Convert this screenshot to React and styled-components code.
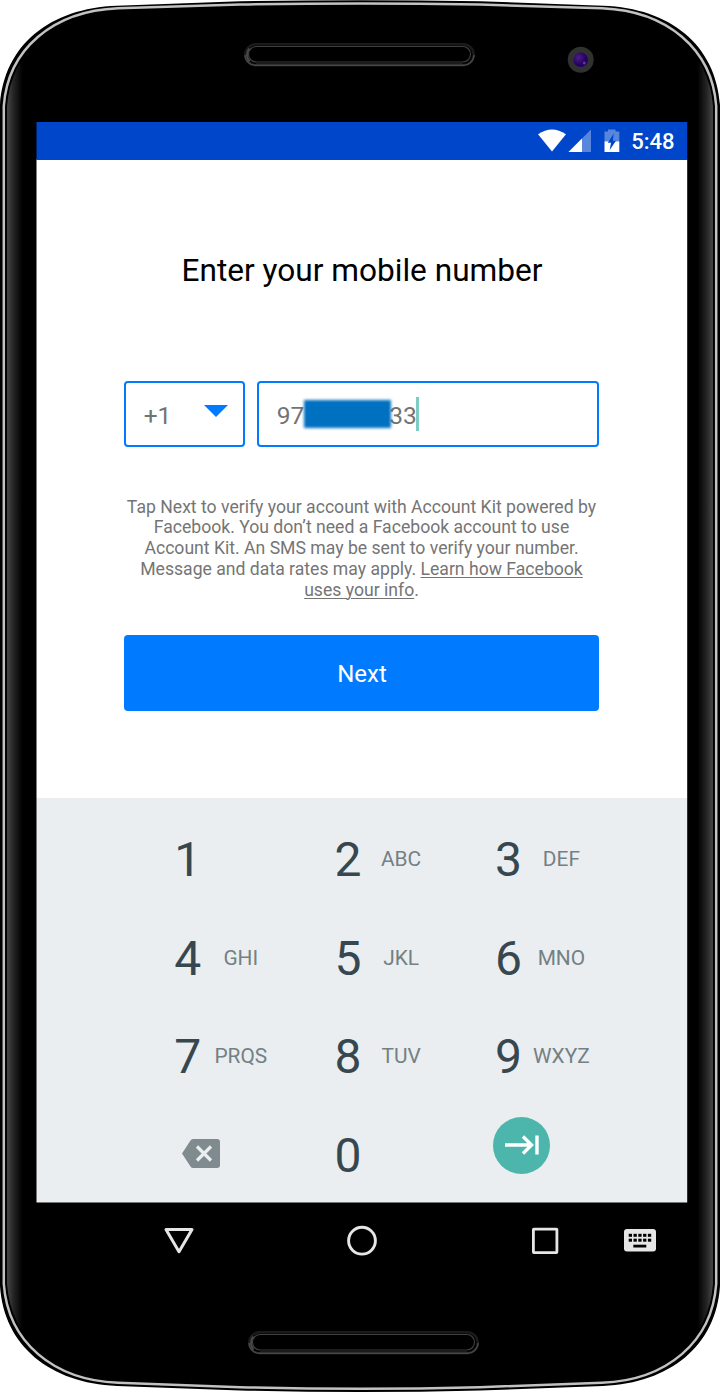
import React from "react";
import styled, { createGlobalStyle } from "styled-components";

const GlobalStyle = createGlobalStyle`
  * { box-sizing: border-box; }
  body { margin: 0; background: #fff; font-family: Roboto, "Liberation Sans", sans-serif; }
`;

const Phone = styled.div`
  position: relative;
  width: 720px;
  height: 1393px;
  overflow: hidden;
`;

const Shell = styled.svg`
  position: absolute;
  inset: 0;
  z-index: -1;
  display: block;
`;

const Body = styled.div`
  display: flex;
  flex-direction: column;
  height: 100%;
  padding: 122px 33px 0 36.5px;
`;

const StatusBar = styled.header`
  display: flex;
  flex: none;
  align-items: center;
  justify-content: flex-end;
  height: 37.5px;
  padding-right: 12.5px;
  background: #0046cb;
  color: #fff;
`;

const StatusIcons = styled.svg`
  display: block;
  margin-right: 11px;
`;

const Clock = styled.span`
  font-size: 22px;
  font-weight: 500;
  line-height: 26px;
  padding-top: 2px;
`;

const Form = styled.main`
  display: flex;
  flex: none;
  flex-direction: column;
  height: 638.5px;
  padding: 91px 88px 0 87.5px;
  background: #fff;
`;

const Title = styled.h1`
  margin: 0 -1px 0 0;
  font-size: 31.6px;
  font-weight: 400;
  line-height: 40px;
  text-align: center;
  white-space: nowrap;
  color: #000;
`;

const Fields = styled.div`
  display: flex;
  gap: 12.5px;
  margin-top: 90px;
`;

const Field = styled.div`
  display: flex;
  align-items: center;
  flex: ${(p) => (p.$grow ? "1" : "none")};
  width: ${(p) => (p.$grow ? "auto" : "120.5px")};
  height: 66.5px;
  padding: 3px 14.5px 0 17.7px;
  border: 2px solid #007bff;
  border-radius: 4px;
  font-size: 24.5px;
  color: #737373;
`;

const Arrow = styled.svg`
  display: block;
  margin: -9px 0 0 auto;
`;

const Redacted = styled.span`
  width: 87px;
  height: 28px;
  margin: -3px -1.5px 0 -0.5px;
  background: #0070c0;
  filter: blur(1.8px);
`;

const Caret = styled.span`
  width: 3px;
  height: 34px;
  margin: -3px 0 0 -1px;
  background: #80cbc4;
`;

const Legal = styled.p`
  margin: 49.5px -10px 0;
  font-size: 17.62px;
  line-height: 20.75px;
  text-align: center;
  white-space: nowrap;
  color: #757575;
`;

const Line = styled.span`
  display: block;
`;

const Link = styled.span`
  text-decoration: underline;
  text-decoration-thickness: 1px;
  text-underline-offset: 2px;
`;

const NextButton = styled.button`
  height: 76px;
  margin-top: 34.7px;
  padding: 2px 0 0 1px;
  border: 0;
  border-radius: 4px;
  background: #007bff;
  color: #fff;
  font: 400 24px Roboto, sans-serif;
`;

const Keypad = styled.section`
  display: grid;
  flex: none;
  grid-template-columns: repeat(3, 160.3px);
  grid-auto-rows: 98.5px;
  height: 404px;
  padding: 13px 0 0 137.8px;
  background: #eaeef1;
`;

const Key = styled.div`
  display: flex;
  align-items: center;
`;

const Digit = styled.span`
  width: 27px;
  font-size: 48px;
  line-height: 56px;
  color: #37474f;
`;

const Letters = styled.span`
  width: 79px;
  padding-bottom: 2px;
  font-size: 20.9px;
  line-height: 26px;
  text-align: center;
  color: #748084;
`;

const Backspace = styled.svg`
  display: block;
  margin: -5px 0 0 7.7px;
`;

const GoButton = styled.div`
  display: flex;
  align-items: center;
  justify-content: center;
  width: 57px;
  height: 57px;
  margin: -21.4px 0 0 -1.8px;
  border-radius: 50%;
  background: #4db6ac;
`;

const NavBar = styled.nav`
  display: flex;
  align-items: center;
  height: 78px;
  padding-left: 126.5px;
`;

const NavIcon = styled.svg`
  display: block;
  flex: none;
  margin-right: ${(p) => p.$gap || 0}px;
`;

const KEYS = [
  ["1", ""], ["2", "ABC"], ["3", "DEF"],
  ["4", "GHI"], ["5", "JKL"], ["6", "MNO"],
  ["7", "PRQS"], ["8", "TUV"], ["9", "WXYZ"],
];

const OUTLINE =
  "M0 105C4 45 50 8 117 5.7L240 1.3Q360 -0.7 480 1.3L603 5.7C670 8 716 45 720 105V1286C716 1346 670 1383 603 1386L480 1390.5Q360 1393.5 240 1390.5L117 1386C50 1383 4 1346 0 1286Z";
const RIM =
  "M3.8 106C8 49 53 11 118 8.3L240 4.6Q360 2.4 480 4.6L602 8.3C667 11 712 49 716.2 106V1284C712 1342 667 1380 602 1382.8L480 1387.2Q360 1390.2 240 1387.2L118 1382.8C53 1380 8 1342 3.8 1284Z";

function Speaker({ x, y }) {
  return (
    <g transform={`translate(${x} ${y})`} fill="none">
      <rect x="1.2" y="1.2" width="228.600" height="21" rx="10.500" stroke="#1a1a1a" strokeWidth="2.500" />
      <path d="M12 22.300H219A10.500 10.500 0 0 0 230 12M12 22.300A10.500 10.500 0 0 1 1 12" stroke="#484848" strokeWidth="1.400" />
      <path d="M5.500 5.500A10 10 0 0 0 5.500 18.500" stroke="#484848" strokeWidth="2.200" />
      <rect x="4.500" y="3.500" width="222" height="15.500" rx="7.700" stroke="#404040" strokeWidth="1.100" />
      <path d="M12 19.500H219" stroke="#1c1c1c" strokeWidth="3" />
    </g>
  );
}

function PhoneShell() {
  return (
    <Shell width="720" height="1393" viewBox="0 0 720 1393">
      <defs>
        <linearGradient id="edge">
          <stop offset="0" stopColor="#484848" />
          <stop offset="0.4" stopColor="#252525" />
          <stop offset="1" stopColor="#000" />
        </linearGradient>
        <clipPath id="rim"><path d={RIM} /></clipPath>
        <radialGradient id="lens" cx="0.35" cy="0.35">
          <stop offset="0" stopColor="#4b1d85" />
          <stop offset="1" stopColor="#25005f" />
        </radialGradient>
      </defs>
      <path d={OUTLINE} fill="#000" />
      <g clipPath="url(#rim)">
        <rect x="7" y="50" width="15.500" height="1290" fill="url(#edge)" />
        <rect x="7" y="50" width="15.500" height="1290" fill="url(#edge)" transform="translate(720 0) scale(-1 1)" />
        <path d={RIM} fill="none" stroke="#000" strokeWidth="6.500" />
      </g>
      <path d={RIM} fill="none" stroke="#c2c2c2" strokeWidth="2.500" />
      <rect x="36.500" y="122" width="650.700" height="37.500" fill="#0046cb" />
      <rect x="36.500" y="159.500" width="650.700" height="638.500" fill="#fff" />
      <rect x="36.500" y="798" width="650.700" height="404.500" fill="#eaeef1" />
      <Speaker x={244} y={43} />
      <Speaker x={248} y={1331} />
      <circle cx="580.7" cy="59.8" r="13" fill="#303131" />
      <circle cx="580.7" cy="59.8" r="7.3" fill="url(#lens)" />
      <circle cx="584.3" cy="63" r="1.5" fill="#5a38a0" />
    </Shell>
  );
}

export default function App() {
  return (
    <Phone>
      <GlobalStyle />
      <PhoneShell />
      <Body>
        <StatusBar>
          <StatusIcons width="83" height="24" viewBox="537 129 83 24">
            <path d="M538 134.2Q552 124.8 566 134.2L552 151.5Z" fill="#fff" />
            <path d="M591 129.5V152H568.5Z" fill="#fff" opacity=".35" />
            <path d="M582 138.5V152H568.5Z" fill="#fff" />
            <path d="M604.5 131.5H608V129.5H615.5V131.5H619.3V141.3H604.5Z" fill="#fff" opacity=".35" />
            <path d="M604.5 141.3H619.3V152H604.5Z" fill="#fff" />
            <path d="M613.8 133.500L607.8 142.8H611L609.700 150L616 140.8H612.8Z" fill="#0046cb" />
          </StatusIcons>
          <Clock>5:48</Clock>
        </StatusBar>
        <Form>
          <Title>Enter your mobile number</Title>
          <Fields>
            <Field>
              +1
              <Arrow width="24" height="12" viewBox="0 0 24 12">
                <path d="M0 0H24L12 12Z" fill="#007bff" />
              </Arrow>
            </Field>
            <Field $grow>
              <span>97</span>
              <Redacted />
              <span>33</span>
              <Caret />
            </Field>
          </Fields>
          <Legal>
            <Line>Tap Next to verify your account with Account Kit powered by</Line>
            <Line>Facebook. You don’t need a Facebook account to use</Line>
            <Line>Account Kit. An SMS may be sent to verify your number.</Line>
            <Line>Message and data rates may apply. <Link>Learn how Facebook</Link></Line>
            <Line><Link>uses your info</Link>.</Line>
          </Legal>
          <NextButton>Next</NextButton>
        </Form>
        <Keypad>
          {KEYS.map(([digit, letters]) => (
            <Key key={digit}>
              <Digit>{digit}</Digit>
              <Letters>{letters}</Letters>
            </Key>
          ))}
          <Key>
            <Backspace width="38" height="29" viewBox="0 0 38 29">
              <path d="M11 0H35Q38 0 38 3V26Q38 29 35 29H11Q9.500 29 8.500 27.500L0 14.500L8.500 1.500Q9.500 0 11 0Z" fill="#808b8f" />
              <path d="M15 7.500L29 21.500M29 7.500L15 21.500" stroke="#eaeef1" strokeWidth="3.200" />
            </Backspace>
          </Key>
          <Key><Digit>0</Digit></Key>
          <Key>
            <GoButton>
              <svg width="34" height="20" viewBox="0 0 34 20">
                <path d="M0 10H27M18 1.500L26.500 10L18 18.500M32 .5V19.500" fill="none" stroke="#fff" strokeWidth="3.400" />
              </svg>
            </GoButton>
          </Key>
        </Keypad>
        <NavBar>
          <NavIcon width="32" height="30" viewBox="0 0 32 30" $gap={151}>
            <path d="M3 3.500H29L16 25.700Z" fill="none" stroke="#e6e6e6" strokeWidth="3" strokeLinejoin="round" />
          </NavIcon>
          <NavIcon width="32" height="32" viewBox="0 0 32 32" $gap={153}>
            <circle cx="16" cy="15.700" r="13.400" fill="none" stroke="#e6e6e6" strokeWidth="2.900" />
          </NavIcon>
          <NavIcon width="28" height="28" viewBox="0 0 28 28" $gap={64.5}>
            <rect x="2.400" y="2.100" width="23.500" height="23.500" rx=".5" fill="none" stroke="#e6e6e6" strokeWidth="2.800" strokeLinejoin="round" />
          </NavIcon>
          <NavIcon width="32" height="24" viewBox="0 0 32 24">
            <rect width="32" height="22.500" rx="3" fill="#e6e6e6" />
            {[0, 1, 2, 3, 4].map((i) => (
              <React.Fragment key={i}>
                <rect x={4.7 + i * 4.8} y="4.800" width="3.300" height="3" />
                <rect x={4.7 + i * 4.8} y="9.700" width="3.300" height="3" />
              </React.Fragment>
            ))}
            <rect x="9.300" y="15.700" width="13" height="2.800" />
          </NavIcon>
        </NavBar>
      </Body>
    </Phone>
  );
}
